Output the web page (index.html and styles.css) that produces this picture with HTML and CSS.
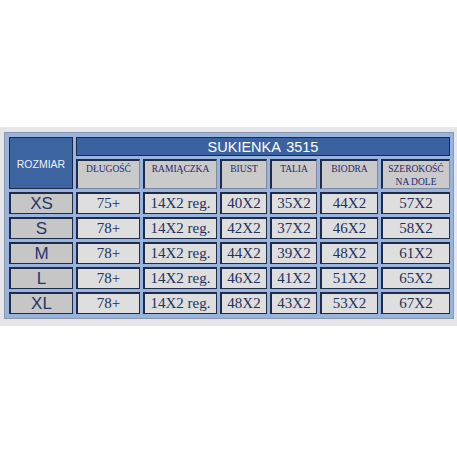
FILE: index.html
```html
<!DOCTYPE html>
<html>
<head>
<meta charset="utf-8">
<link rel="stylesheet" href="styles.css">
</head>
<body>
<div class="page">
  <div class="band">
    <div class="frame">
      <div class="grid">
        <div class="cell corner">ROZMIAR</div>
        <div class="cell title">SUKIENKA 3515</div>
        <div class="cell sub">DŁUGOŚĆ</div>
        <div class="cell sub">RAMIĄCZKA</div>
        <div class="cell sub">BIUST</div>
        <div class="cell sub">TALIA</div>
        <div class="cell sub">BIODRA</div>
        <div class="cell sub two">SZEROKOŚĆ<br>NA DOLE</div>

        <div class="cell size">XS</div><div class="cell val">75+</div><div class="cell val">14X2 reg.</div><div class="cell val">40X2</div><div class="cell val">35X2</div><div class="cell val">44X2</div><div class="cell val">57X2</div>
        <div class="cell size">S</div><div class="cell val">78+</div><div class="cell val">14X2 reg.</div><div class="cell val">42X2</div><div class="cell val">37X2</div><div class="cell val">46X2</div><div class="cell val">58X2</div>
        <div class="cell size">M</div><div class="cell val">78+</div><div class="cell val">14X2 reg.</div><div class="cell val">44X2</div><div class="cell val">39X2</div><div class="cell val">48X2</div><div class="cell val">61X2</div>
        <div class="cell size">L</div><div class="cell val">78+</div><div class="cell val">14X2 reg.</div><div class="cell val">46X2</div><div class="cell val">41X2</div><div class="cell val">51X2</div><div class="cell val">65X2</div>
        <div class="cell size">XL</div><div class="cell val">78+</div><div class="cell val">14X2 reg.</div><div class="cell val">48X2</div><div class="cell val">43X2</div><div class="cell val">53X2</div><div class="cell val">67X2</div>
      </div>
    </div>
  </div>
</div>
</body>
</html>
```

FILE: styles.css
```css
html, body {
  margin: 0;
  padding: 0;
  background: #ffffff;
}

.page {
  width: 457px;
  height: 457px;
  padding-top: 127px;
  box-sizing: border-box;
}

.band {
  background: #e4e6ea;
  padding: 5px 3px 7px 4px;
}

.frame {
  border: 1px solid #8c98aa;
  background: #98b4de;
  padding: 4px 2px 4px 4px;
}

.grid {
  display: grid;
  grid-template-columns: 64px 64px 74px 47px 47px 58px 69px;
  grid-template-rows: 19px 30px repeat(5, 22px);
  column-gap: 3px;
  row-gap: 3px;
}

.cell {
  box-sizing: border-box;
  display: flex;
  align-items: center;
  justify-content: center;
  text-align: center;
}

.corner {
  grid-row: 1 / span 2;
  background: #3c64a0;
  border: 1px solid #1c2a48;
  color: #eef1f8;
  font-family: "Liberation Sans", Arial, sans-serif;
  font-size: 10.5px;
  padding-top: 2px;
}

.title {
  grid-column: 2 / span 6;
  background: #3a62a0;
  border: 1px solid #1c2a48;
  color: #ffffff;
  font-family: "Liberation Sans", Arial, sans-serif;
  font-size: 14.5px;
  word-spacing: 2px;
}

.sub {
  align-items: flex-start;
  background: #cacaca;
  border-top: 2px solid #1e2c4a;
  border-left: 2px solid #1e2c4a;
  border-right: 1px solid #7e8aa0;
  border-bottom: 1px solid #7e8aa0;
  color: #22286e;
  font-family: "Liberation Serif", "Times New Roman", serif;
  font-size: 9.5px;
  padding-top: 2px;
  line-height: 13px;
}

.size {
  background: #c6c6c6;
  border: 1px solid #1e2c4a;
  border-top-width: 2px;
  border-left-width: 2px;
  color: #26366a;
  font-family: "Liberation Sans", Arial, sans-serif;
  font-size: 17px;
}

.val {
  background: #dedede;
  border: 1px solid #1e2c4a;
  border-top-width: 2px;
  border-left-width: 2px;
  color: #22305a;
  font-family: "Liberation Serif", "Times New Roman", serif;
  font-size: 15px;
}
```
